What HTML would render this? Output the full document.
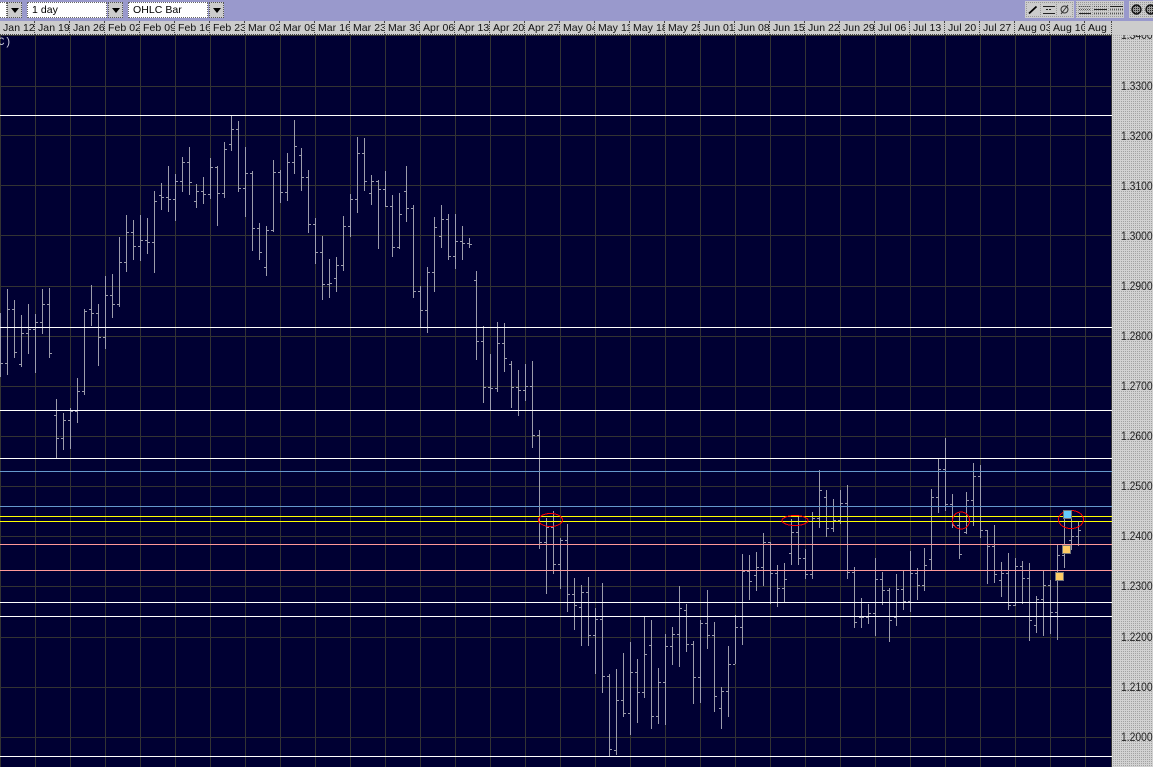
<!DOCTYPE html>
<html><head><meta charset="utf-8"><title>OHLC chart</title>
<style>
html,body{margin:0;padding:0;background:#9999cc;overflow:hidden}
#p{position:relative;width:1153px;height:767px;overflow:hidden;background:#9999cc;font-family:"Liberation Sans",sans-serif;color:#000}
.a{position:absolute}
.w{position:absolute;top:2px;height:14px;background:#fff;border:1px dotted #666;font-size:10.5px;line-height:14px;padding-left:4px;letter-spacing:.05px;box-sizing:content-box}
.b{position:absolute;top:2px;width:13px;height:14px;background:#ccc;border:1px dotted #555}
.b:after{content:"";position:absolute;left:3px;top:5px;border-left:4px solid transparent;border-right:4px solid transparent;border-top:5px solid #000}
#h{position:absolute;left:0;top:21px;width:1153px;height:14px;background:#ccc}
#h div{position:absolute;top:0;width:34px;height:13px;border-right:1px dotted #444;border-bottom:1px dotted #444;overflow:hidden;white-space:nowrap;font-size:10.5px;line-height:14px;text-indent:3px;letter-spacing:.05px;color:#111}
#r{position:absolute;left:1112px;top:35px;width:41px;height:732px;background:conic-gradient(#a2a2a2 25%,#d2d2d2 0) 0 0/2px 2px;overflow:hidden}
#r span{position:absolute;left:9px;font-size:11.5px;line-height:12px;color:#222;width:40px;transform:scaleX(.9);transform-origin:left center}
svg{position:absolute;left:0;top:0}
</style></head><body><div id="p">
<div class="w" style="left:-6px;width:7px"></div><div class="b" style="left:7px"></div>
<div class="w" style="left:27px;width:74px">1 day</div><div class="b" style="left:108px"></div>
<div class="w" style="left:128px;width:74px">OHLC Bar</div><div class="b" style="left:209px"></div>
<div id="h">
<div style="left:0">Jan 12</div><div style="left:35px">Jan 19</div><div style="left:70px">Jan 26</div><div style="left:105px">Feb 02</div><div style="left:140px">Feb 09</div><div style="left:175px">Feb 16</div><div style="left:210px">Feb 23</div><div style="left:245px">Mar 02</div><div style="left:280px">Mar 09</div><div style="left:315px">Mar 16</div><div style="left:350px">Mar 23</div><div style="left:385px">Mar 30</div><div style="left:420px">Apr 06</div><div style="left:455px">Apr 13</div><div style="left:490px">Apr 20</div><div style="left:525px">Apr 27</div><div style="left:560px">May 04</div><div style="left:595px">May 11</div><div style="left:630px">May 18</div><div style="left:665px">May 25</div><div style="left:700px">Jun 01</div><div style="left:735px">Jun 08</div><div style="left:770px">Jun 15</div><div style="left:805px">Jun 22</div><div style="left:840px">Jun 29</div><div style="left:875px">Jul 06</div><div style="left:910px">Jul 13</div><div style="left:945px">Jul 20</div><div style="left:980px">Jul 27</div><div style="left:1015px">Aug 03</div><div style="left:1050px">Aug 10</div><div style="left:1085px;width:26px">Aug</div>
</div>
<div class="a" style="left:0;top:35px;width:1112px;height:732px;background:#000033"></div>
<div id="r">
<span style="top:-5px">1.3400</span><span style="top:46px">1.3300</span><span style="top:96px">1.3200</span><span style="top:146px">1.3100</span><span style="top:196px">1.3000</span><span style="top:246px">1.2900</span><span style="top:296px">1.2800</span><span style="top:346px">1.2700</span><span style="top:396px">1.2600</span><span style="top:446px">1.2500</span><span style="top:496px">1.2400</span><span style="top:546px">1.2300</span><span style="top:597px">1.2200</span><span style="top:647px">1.2100</span><span style="top:697px">1.2000</span>
</div>
<svg width="1153" height="767" viewBox="0 0 1153 767" shape-rendering="crispEdges">
<defs><pattern id="d" width="2" height="2" patternUnits="userSpaceOnUse"><rect width="2" height="2" fill="#ccc"/><rect width="1" height="1" fill="#999"/></pattern>
<pattern id="e" width="2" height="2" patternUnits="userSpaceOnUse"><rect width="2" height="2" fill="#999"/><rect width="1" height="1" fill="#222"/></pattern></defs>
<!-- toolbar right -->
<rect x="1025" y="1" width="49" height="17" fill="url(#d)"/>
<rect x="1027" y="3" width="13" height="13" fill="#ccc"/><rect x="1042" y="3" width="14" height="13" fill="#ccc"/><rect x="1058" y="3" width="14" height="13" fill="#ccc"/>
<rect x="1076" y="1" width="48" height="17" fill="url(#d)"/>
<rect x="1129" y="1" width="15" height="17" fill="url(#d)"/><rect x="1144" y="1" width="9" height="17" fill="url(#d)"/>
<g fill="none" stroke="#000" shape-rendering="auto">
<path d="M1029 13.5L1036.5 6.5" stroke-width="1.8"/>
<circle cx="1064.5" cy="9.5" r="3.5" stroke="#333"/><path d="M1061 14L1068 5" stroke="#333"/>
</g>
<g transform="translate(0 .5)" fill="none" stroke="#222">
<path d="M1043 6h12M1043 13h12"/><path d="M1046 9h6" stroke-dasharray="2 1"/>
<path d="M1079 13h12M1094 9h13M1110 6h13"/>
<path d="M1079 6h12M1094 6h13M1094 13h13M1110 13h13M1110 9h13M1079 9h12" stroke-dasharray="1 1" stroke="#555"/>
</g>
<g shape-rendering="auto"><circle cx="1136.5" cy="9.5" r="4.5" fill="url(#e)" stroke="#111" stroke-width="1.4"/><circle cx="1150.5" cy="9.5" r="4.5" fill="url(#e)" stroke="#111" stroke-width="1.4"/></g>
<!-- grid -->
<g transform="translate(.5 0)" stroke="#333" fill="none"><path d="M0 35V767M35 35V767M70 35V767M105 35V767M140 35V767M175 35V767M210 35V767M245 35V767M280 35V767M315 35V767M350 35V767M385 35V767M420 35V767M455 35V767M490 35V767M525 35V767M560 35V767M595 35V767M630 35V767M665 35V767M700 35V767M735 35V767M770 35V767M805 35V767M840 35V767M875 35V767M910 35V767M945 35V767M980 35V767M1015 35V767M1050 35V767M1085 35V767M1111 35V767"/></g>
<g transform="translate(0 .5)" stroke="#333" fill="none"><path d="M0 35H1112M0 86H1112M0 135H1112M0 185H1112M0 235H1112M0 286H1112M0 336H1112M0 386H1112M0 436H1112M0 486H1112M0 536H1112M0 586H1112M0 637H1112M0 687H1112M0 737H1112"/></g>
<!-- bars: verticals -->
<g transform="translate(.5 0)" stroke="#9c9cab" fill="none"><path d="M0 313V377M7 289V375M14 300V358M21 315V367M28 304V354M35 314V373M42 289V334M49 288V358M56 399V458M63 413V450M70 408V449M77 378V423M84 309V395M91 285V326M98 304V366M105 276V349M112 274V318M119 237V307M126 215V272M133 220V260M140 215V261M147 218V254M154 191V273M161 183V210M168 166V212M175 174V221M182 157V192M189 147V195M196 184V208M203 177V204M210 158V199M217 166V226M224 142V198M231 115V151M238 121V192M245 147V217M252 171V251M259 223V260M266 226V276M273 160V232M280 170V203M287 153V201M294 120V174M301 148V191M308 170V233M315 218V264M322 236V300M329 259V298M336 257V292M343 216V271M350 194V237M357 137V213M364 138V191M371 175V205M378 180V249M385 171V207M392 195V257M399 193V249M406 166V222M413 205V298M420 286V328M427 267V333M434 217V292M441 205V248M448 214V260M455 214V269M462 226V260M469 238V248M476 271V360M483 326V403M490 354V410M497 322V392M504 323V372M511 361V408M518 370V416M525 364V401M532 361V448M539 430V549M546 518V594M553 511V574M560 538V589M567 524V612M574 578V630M581 585V646M588 577V646M595 608V674M602 583V693M609 674V756M616 669V755M623 653V717M630 642V735M637 659V723M644 617V698M651 620V729M658 668V724M665 634V725M672 627V665M679 586V667M686 604V652M693 641V704M700 620V703M707 590V649M714 622V712M721 687V729M728 646V717M735 615V664M742 554V645M749 555V600M756 552V591M763 533V586M770 542V604M777 565V607M784 563V602M791 519V565M798 517V565M805 549V579M812 512V579M819 470V528M826 490V537M833 499V532M840 490V524M847 485V579M854 567V628M861 598V628M868 604V624M875 558V636M882 572V605M889 588V642M896 574V626M903 571V610M910 551V612M917 568V600M924 548V591M931 489V570M938 458V513M945 438V511M952 494V528M959 513V559M966 492V534M973 463V526M980 465V538M987 530V584M994 525V583M1001 562V597M1008 553V610M1015 558V606M1022 561V604M1029 563V641M1036 596V633M1043 570V636M1050 580V634M1057 545V640M1064 510V568M1071 515V550M1078 521V546"/></g>
<!-- bars: ticks -->
<g transform="translate(0 .5)" stroke="#9c9cab" fill="none"><path d="M1 363h2M5 363h2M8 309h2M12 309h2M15 352h2M19 364h2M22 333h2M26 333h2M29 329h2M33 329h2M36 322h2M40 322h2M43 304h2M47 304h2M50 353h2M54 415h2M57 438h2M61 438h2M64 420h2M68 420h2M71 411h2M75 411h2M78 391h2M82 391h2M85 311h2M89 309h2M92 313h2M96 313h2M99 337h2M103 337h2M106 295h2M110 295h2M113 304h2M117 304h2M120 262h2M124 262h2M127 232h2M131 232h2M134 246h2M138 246h2M141 240h2M145 240h2M148 242h2M152 242h2M155 201h2M159 195h2M162 197h2M166 197h2M169 199h2M173 199h2M176 181h2M180 181h2M183 162h2M187 162h2M190 182h2M194 201h2M197 191h2M201 191h2M204 194h2M208 194h2M211 167h2M215 167h2M218 193h2M222 193h2M225 149h2M229 144h2M232 129h2M236 129h2M239 188h2M243 188h2M246 173h2M250 173h2M253 228h2M257 228h2M260 252h2M264 267h2M267 230h2M271 230h2M274 172h2M278 172h2M281 192h2M285 192h2M288 162h2M292 162h2M295 146h2M299 155h2M302 177h2M306 177h2M309 224h2M313 224h2M316 252h2M320 252h2M323 284h2M327 284h2M330 283h2M334 278h2M337 265h2M341 265h2M344 226h2M348 226h2M351 199h2M355 199h2M358 153h2M362 153h2M365 181h2M369 193h2M372 181h2M376 181h2M379 189h2M383 189h2M386 206h2M390 206h2M393 247h2M397 247h2M400 214h2M404 191h2M407 208h2M411 208h2M414 291h2M418 291h2M421 310h2M425 310h2M428 272h2M432 272h2M435 227h2M439 236h2M442 219h2M446 219h2M449 256h2M453 256h2M456 241h2M460 241h2M463 243h2M467 243h2M470 244h2M474 280h2M477 341h2M481 341h2M484 387h2M488 387h2M491 388h2M495 388h2M498 343h2M502 343h2M505 358h2M509 364h2M512 387h2M516 387h2M519 390h2M523 390h2M526 386h2M530 386h2M533 435h2M537 435h2M540 542h2M544 542h2M547 527h2M551 527h2M554 564h2M558 564h2M561 540h2M565 540h2M568 594h2M572 594h2M575 605h2M579 607h2M582 592h2M586 592h2M589 635h2M593 635h2M596 619h2M600 619h2M603 676h2M607 676h2M610 749h2M614 750h2M617 700h2M621 700h2M624 713h2M628 713h2M631 672h2M635 672h2M638 692h2M642 692h2M645 654h2M649 645h2M652 716h2M656 716h2M659 682h2M663 682h2M666 646h2M670 646h2M673 634h2M677 634h2M680 608h2M684 610h2M687 644h2M691 644h2M694 677h2M698 677h2M701 623h2M705 623h2M708 635h2M712 635h2M715 696h2M719 708h2M722 691h2M726 691h2M729 664h2M733 664h2M736 627h2M740 627h2M743 571h2M747 571h2M750 581h2M754 575h2M757 567h2M761 567h2M764 542h2M768 542h2M771 573h2M775 573h2M778 588h2M782 588h2M785 579h2M789 553h2M792 532h2M796 532h2M799 558h2M803 558h2M806 574h2M810 574h2M813 518h2M817 518h2M820 490h2M824 497h2M827 528h2M831 528h2M834 520h2M838 520h2M841 503h2M845 503h2M848 572h2M852 572h2M855 622h2M859 617h2M862 617h2M866 617h2M869 613h2M873 613h2M876 579h2M880 579h2M883 590h2M887 590h2M890 620h2M894 617h2M897 589h2M901 589h2M904 601h2M908 601h2M911 573h2M915 573h2M918 585h2M922 585h2M925 565h2M929 559h2M932 497h2M936 497h2M939 469h2M943 469h2M946 504h2M950 504h2M953 525h2M957 525h2M960 554h2M964 532h2M967 500h2M971 500h2M974 476h2M978 476h2M981 530h2M985 530h2M988 546h2M992 546h2M995 574h2M999 580h2M1002 573h2M1006 573h2M1009 605h2M1013 605h2M1016 566h2M1020 566h2M1023 578h2M1027 578h2M1030 620h2M1034 625h2M1037 599h2M1041 599h2M1044 585h2M1048 585h2M1051 612h2M1055 612h2M1058 555h2M1062 555h2M1065 545h2M1069 540h2M1072 536h2M1076 536h2M1079 530h2"/></g>
<!-- levels -->
<g transform="translate(0 .5)" fill="none">
<path stroke="#fff" d="M0 115H1112M0 327H1112M0 410H1112M0 458H1112M0 602H1112M0 616H1112M0 756H1112"/>
<path stroke="#6699cc" d="M0 471H1112M0 506H1112"/>
<path stroke="#ffff00" d="M0 516H1112M0 521H1112"/>
<path stroke="#ff9999" d="M0 544H1112M0 570H1112"/>
</g>
<g fill="none" stroke="#ff0000">
<ellipse cx="550.5" cy="520" rx="12" ry="6.5"/>
<ellipse cx="795" cy="520.5" rx="13" ry="5"/>
<ellipse cx="961" cy="520.5" rx="8.5" ry="8.5"/>
<ellipse cx="1071" cy="519.5" rx="12.5" ry="9"/>
</g>
<rect x="1063.5" y="510.5" width="8" height="8" fill="#66ccff" stroke="#777"/>
<rect x="1062.5" y="545.5" width="8" height="8" fill="#ffcc66" stroke="#777"/>
<rect x="1055.5" y="572.5" width="8" height="8" fill="#ffcc66" stroke="#777"/>
<text x="-2" y="45" font-family="Liberation Mono, monospace" font-size="11" fill="#c8c8d8" shape-rendering="auto">C)</text>
</svg>
</div></body></html>
